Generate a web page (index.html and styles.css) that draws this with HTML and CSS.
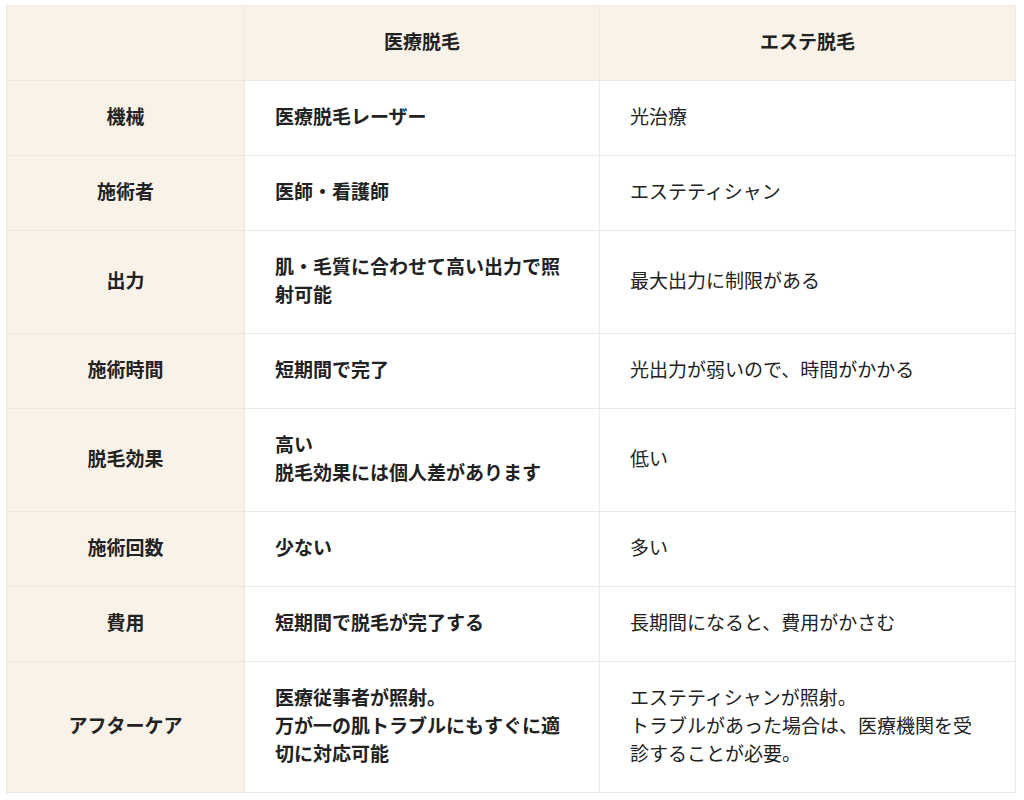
FILE: index.html
```html
<!DOCTYPE html>
<html lang="ja">
<head>
<meta charset="utf-8">
<title>医療脱毛とエステ脱毛の比較</title>
<link rel="stylesheet" href="styles.css">
</head>
<body>
<table class="compare">
  <colgroup>
    <col class="c-label">
    <col class="c-medical">
    <col class="c-esthe">
  </colgroup>
  <thead>
    <tr>
      <th class="head"></th>
      <th class="head">医療脱毛</th>
      <th class="head">エステ脱毛</th>
    </tr>
  </thead>
  <tbody>
    <tr>
      <th class="label">機械</th>
      <td class="med">医療脱毛レーザー</td>
      <td class="est">光治療</td>
    </tr>
    <tr>
      <th class="label">施術者</th>
      <td class="med">医師・看護師</td>
      <td class="est">エステティシャン</td>
    </tr>
    <tr>
      <th class="label">出力</th>
      <td class="med">肌・毛質に合わせて高い出力で照射可能</td>
      <td class="est">最大出力に制限がある</td>
    </tr>
    <tr>
      <th class="label">施術時間</th>
      <td class="med">短期間で完了</td>
      <td class="est">光出力が弱いので、時間がかかる</td>
    </tr>
    <tr>
      <th class="label">脱毛効果</th>
      <td class="med">高い<br>脱毛効果には個人差があります</td>
      <td class="est">低い</td>
    </tr>
    <tr>
      <th class="label">施術回数</th>
      <td class="med">少ない</td>
      <td class="est">多い</td>
    </tr>
    <tr>
      <th class="label">費用</th>
      <td class="med">短期間で脱毛が完了する</td>
      <td class="est">長期間になると、費用がかさむ</td>
    </tr>
    <tr>
      <th class="label">アフターケア</th>
      <td class="med">医療従事者が照射。<br>万が一の肌トラブルにもすぐに適切に対応可能</td>
      <td class="est">エステティシャンが照射。<br>トラブルがあった場合は、医療機関を受診することが必要。</td>
    </tr>
  </tbody>
</table>
</body>
</html>
```

FILE: styles.css
```css
html, body {
  margin: 0;
  padding: 0;
  background: #ffffff;
}

body {
  padding: 5px 0 0 6px;
  font-family: "Noto Sans CJK JP", "Noto Sans", sans-serif;
  font-size: 19px;
  line-height: 28px;
  color: #222222;
}

.compare {
  border-collapse: collapse;
  width: 1009px;
  table-layout: fixed;
}

.c-label { width: 238px; }
.c-medical { width: 355px; }
.c-esthe { width: 416px; }

.compare th,
.compare td {
  border: 1px solid #ece8e2;
  padding: 21px 30px 25px;
  vertical-align: middle;
}

.head {
  background: #f8f2e9;
  font-weight: bold;
  text-align: center;
  border-color: #e9e3d9;
}

.label {
  background: #f8f2e9;
  font-weight: bold;
  text-align: center;
  border-color: #e9e3d9;
}

.med {
  font-weight: bold;
  text-align: left;
}

.est {
  font-weight: normal;
  text-align: left;
}
```
